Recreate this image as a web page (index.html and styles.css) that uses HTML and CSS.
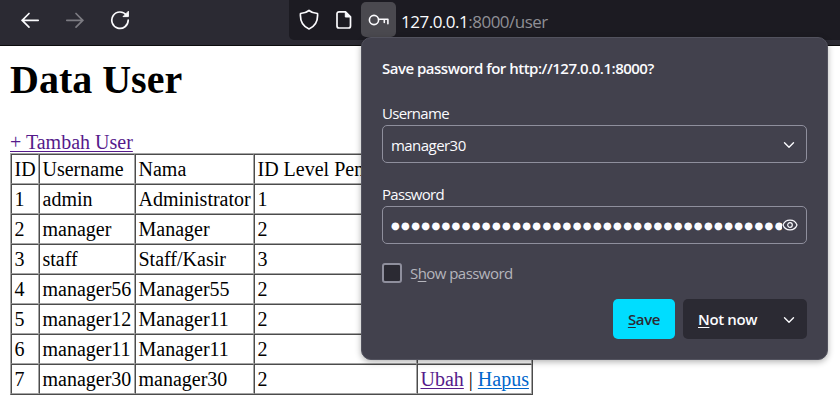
FILE: index.html
```html
<!DOCTYPE html>
<html lang="id">
<head>
<meta charset="utf-8">
<title>Data User</title>
<link rel="stylesheet" href="styles.css">
</head>
<body>
<header class="toolbar">
  <nav class="nav">
    <svg class="icon" width="20" height="20" viewBox="0 0 20 20"><path d="M18.2 10.3H2M9 3.5 2.2 10.3 9 17.1"/></svg>
    <svg class="icon icon-off" width="20" height="20" viewBox="0 0 20 20"><path d="M1.8 10.3H18M11 3.5l6.8 6.8-6.8 6.8"/></svg>
    <svg class="icon" width="20" height="20" viewBox="0 0 20 20"><path d="M16.5 5.2A8.2 8.2 0 1 0 18.2 10"/><path class="solid" d="M18.4 1.6v5h-5z"/></svg>
  </nav>
  <div class="urlbar">
    <svg class="icon shield" width="20" height="22" viewBox="0 0 20 22"><path d="M10 1.5C8 3.200 4.500 4.300 1.500 4.500 1 10.500 3 17 10 20 17 17 19 10.500 18.500 4.500 15.500 4.300 12 3.200 10 1.500Z"/></svg>
    <svg class="icon page-icon" width="18" height="20" viewBox="0 0 18 20"><path d="M4 1.800h6.500l5 5V16a2 2 0 0 1-2 2H4a2 2 0 0 1-2-2V3.800a2 2 0 0 1 2-2Z"/><path class="solid" d="M10.300 2v5h5z"/></svg>
    <span class="key"><svg class="icon" width="22" height="14" viewBox="0 0 22 14"><circle cx="6" cy="7" r="4.600"/><path d="M10.600 6.300h9.300v4.500M16.300 6.500v3"/></svg></span>
    <span class="url"><b>127.0.0.1</b>:8000/user</span>
  </div>
</header>
<main class="page">
  <h1>Data User</h1>
  <a class="visited" href="#">+ Tambah User</a>
  <table>
    <colgroup><col class="c-id"><col class="c-user"><col class="c-name"><col class="c-level"><col class="c-act"></colgroup>
    <tr><td>ID</td><td>Username</td><td>Nama</td><td>ID Level Pengguna</td><td>Aksi</td></tr>
    <tr><td>1</td><td>admin</td><td>Administrator</td><td>1</td><td></td></tr>
    <tr><td>2</td><td>manager</td><td>Manager</td><td>2</td><td></td></tr>
    <tr><td>3</td><td>staff</td><td>Staff/Kasir</td><td>3</td><td></td></tr>
    <tr><td>4</td><td>manager56</td><td>Manager55</td><td>2</td><td></td></tr>
    <tr><td>5</td><td>manager12</td><td>Manager11</td><td>2</td><td></td></tr>
    <tr><td>6</td><td>manager11</td><td>Manager11</td><td>2</td><td></td></tr>
    <tr><td>7</td><td>manager30</td><td>manager30</td><td>2</td><td><a class="visited" href="#">Ubah</a> | <a class="link" href="#">Hapus</a></td></tr>
  </table>
</main>
<section class="panel">
  <h2>Save password for http://127.0.0.1:8000?</h2>
  <div class="label">Username</div>
  <div class="field"><span class="value">manager30</span><svg class="icon" width="12" height="12" viewBox="0 0 12 12"><path d="M1.500 4.800 6 9.300l4.500-4.500"/></svg></div>
  <div class="label second">Password</div>
  <div class="field secret"><span class="dots">●●●●●●●●●●●●●●●●●●●●●●●●●●●●●●●●●●●●●●●●●●●●</span><svg class="icon eye" width="16" height="14" viewBox="0 0 16 14"><path d="M1 7C3.500 0.500 12.500 0.500 15 7 12.500 13.500 3.500 13.500 1 7Z"/><circle cx="8" cy="7" r="2.300"/></svg></div>
  <div class="check"><span class="box"></span><span class="check-text">S<u>h</u>ow password</span></div>
  <div class="actions">
    <div class="btn save"><span><u>S</u>ave</span></div>
    <div class="btn later"><span><u>N</u>ot now</span><svg class="icon" width="12" height="12" viewBox="0 0 12 12"><path d="M1.500 4.800 6 9.300l4.500-4.500"/></svg></div>
  </div>
</section>
</body>
</html>
```
FILE: styles.css
```css
* { box-sizing: border-box; }
body { margin: 0; height: 408px; overflow: hidden; background: #fff; color: #000; font: 20px/24px "Liberation Serif", serif; }
.icon { display: block; flex: none; fill: none; stroke: #fbfbfe; stroke-width: 1.7; stroke-linecap: round; stroke-linejoin: round; }
.solid { fill: #fbfbfe; stroke-width: 1; }
.icon-off { stroke: #7c7b82; }

.toolbar { display: flex; height: 46px; background: #2b2a33; border-bottom: 1px solid #0c0c0d; font-family: "Open Sans", sans-serif; }
.nav { display: flex; gap: 25px; width: 289px; padding: 10px 0 0 20px; }
.urlbar { display: flex; flex: 1; height: 40px; background: #1c1b22; border-bottom-left-radius: 5px; }
.shield { margin: 9px 0 0 10px; }
.page-icon { margin: 10px 0 0 16px; }
.key { display: flex; align-items: center; justify-content: center; width: 35px; height: 35px; margin: 2px 0 0 8px; background: #4a494f; border-radius: 5px; }
.key .icon { stroke-width: 1.6; }
.url { margin-left: 5px; font-size: 17px; line-height: 43px; letter-spacing: -.5px; color: #8f8f95; white-space: nowrap; }
.url b { font-weight: 400; color: #fbfbfe; }

.page { padding: 11px 10px 0; }
h1 { margin: 0 0 27px; font-size: 40px; line-height: 46px; }
a { text-decoration: underline; text-decoration-thickness: 1px; text-underline-offset: 2px; }
.visited { color: #551a8b; }
.link { color: #0066cc; }
table { table-layout: fixed; width: 523px; margin-top: -1px; border: 1px solid; border-color: #a6a6a6 #4c4c4c #4c4c4c #a6a6a6; border-collapse: separate; border-spacing: 0; }
td { height: 30px; padding: 0 0 0 2.5px; border: 1px solid; border-color: #4c4c4c #a6a6a6 #a6a6a6 #4c4c4c; white-space: nowrap; overflow: hidden; }
.c-id { width: 28px; }
.c-user { width: 96px; }
.c-name { width: 119px; }
.c-level { width: 163px; }
.c-act { width: 115px; }

.panel { position: absolute; left: 361px; top: 37px; width: 467px; height: 323px; padding: 19px 20px 0; color: #fbfbfe; background: #42414d; border: 1px solid #52525e; border-radius: 10px; box-shadow: 0 2px 6px rgba(0,0,0,.3); font: 15px/22px "Open Sans", sans-serif; letter-spacing: -.55px; }
h2 { margin: 0; font-size: 15px; line-height: 22px; font-weight: 600; letter-spacing: -.5px; white-space: nowrap; }
.label { margin-top: 23px; letter-spacing: -.7px; }
.label.second { margin-top: 20px; }
.field { display: flex; align-items: center; justify-content: space-between; height: 38px; margin-top: 1px; padding: 0 11px 0 8px; border: 1px solid #8f8f9d; border-radius: 5px; }
.value { padding-top: 1px; }
.field .icon, .later .icon { stroke-width: 1.4; }
.field .eye { stroke-width: 1.2; }
.secret { padding-right: 8px; }
.dots { flex: 1; width: 0; padding: 3px 0 0 0; overflow: hidden; white-space: nowrap; font: 10px/20px "DejaVu Sans", sans-serif; letter-spacing: 1.37px; text-rendering: geometricPrecision; }
u { text-decoration: underline; text-decoration-thickness: 1px; text-underline-offset: 2px; }
.check { display: flex; align-items: center; gap: 8px; margin-top: 18px; color: #b5b5bc; }
.box { width: 20px; height: 20px; border: 2px solid #8f8f9d; border-radius: 3px; background: #2b2a33; }
.actions { display: flex; justify-content: flex-end; gap: 8px; margin-top: 15px; }
.btn { display: flex; align-items: center; height: 40px; border-radius: 5px; font-weight: 600; letter-spacing: -.35px; }
.save { width: 62px; justify-content: center; color: #2b2a33; background: #00ddff; }
.later { width: 124px; justify-content: space-between; padding: 0 12px 0 15px; background: #2b2a33; }
```
